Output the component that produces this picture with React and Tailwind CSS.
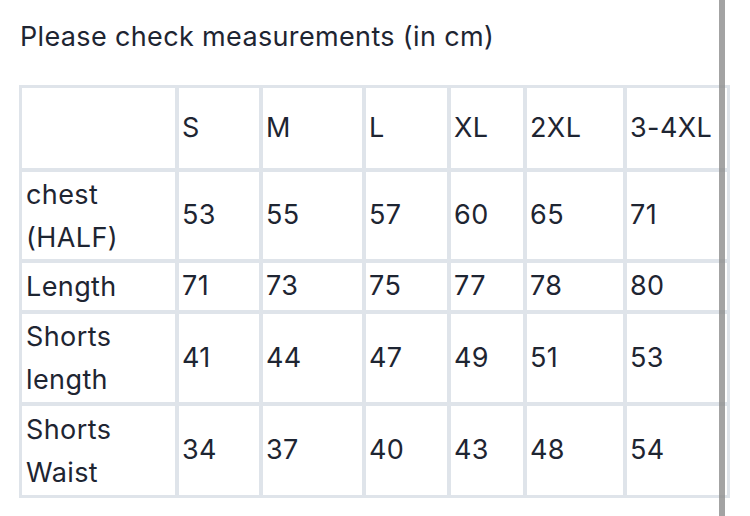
import React from 'react'

const sizes = ['S', 'M', 'L', 'XL', '2XL', '3-4XL']

const rows = [
  { label: ['chest', '(HALF)'], h: 'h-[87px]', values: [53, 55, 57, 60, 65, 71] },
  { label: ['Length'], h: 'h-[47px]', values: [71, 73, 75, 77, 78, 80] },
  { label: ['Shorts', 'length'], h: 'h-[88px]', values: [41, 44, 47, 49, 51, 53] },
  { label: ['Shorts', 'Waist'], h: 'h-[89px]', values: [34, 37, 40, 43, 48, 54] },
]

export default function App() {
  return (
    <div className="relative w-[750px] h-[516px] overflow-hidden bg-white text-[#1e2532] font-['Inter','Liberation_Sans',sans-serif]">
      <div className="pl-[20px] pt-[20px]">
        <h1 className="text-[27px] leading-[34px] tracking-[0.35px]">Please check measurements (in cm)</h1>

        {/* grid lines are the gray background showing through the gaps */}
        <div className="mt-[31px] -ml-[1px] w-[711px] bg-[#dfe4ea] p-[3px] grid grid-cols-[153px_80px_99px_81px_72px_96px_100px] gap-[4px] text-[27px] tracking-[0.4px]">
          <div className="bg-white h-[80px]" />
          {sizes.map((s) => (
            <div key={s} className="bg-white h-[80px] flex items-center pl-[3px]">
              {s}
            </div>
          ))}

          {rows.map((row) => (
            <React.Fragment key={row.label.join(' ')}>
              <div className={`bg-white ${row.h} flex flex-col justify-center pl-[4px] leading-[43px]`}>
                {row.label.map((l) => (
                  <span key={l}>{l}</span>
                ))}
              </div>
              {row.values.map((v, i) => (
                <div key={i} className={`bg-white ${row.h} flex items-center pl-[3px]`}>
                  {v}
                </div>
              ))}
            </React.Fragment>
          ))}
        </div>
      </div>

      {/* scroll indicator */}
      <div className="absolute top-0 left-[719px] w-[6px] h-[516px] bg-[#8c8c8c]/80" />
    </div>
  )
}
